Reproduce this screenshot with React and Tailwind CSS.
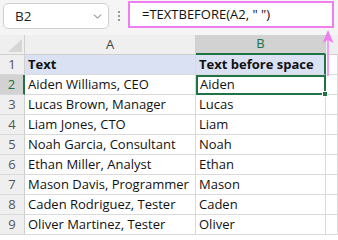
import { ChevronDown } from 'lucide-react'

const ROWS = [
  ['Aiden Williams, CEO', 'Aiden'],
  ['Lucas Brown, Manager', 'Lucas'],
  ['Liam Jones, CTO', 'Liam'],
  ['Noah Garcia, Consultant', 'Noah'],
  ['Ethan Miller, Analyst', 'Ethan'],
  ['Mason Davis, Programmer', 'Mason'],
  ['Caden Rodriguez, Tester', 'Caden'],
  ['Oliver Martinez, Tester', 'Oliver'],
]

const font = { fontFamily: '"Open Sans", "Noto Sans", sans-serif' }

function RowNum({ n, active }) {
  return (
    <div
      className={
        'h-5 flex items-center justify-center text-[13px] border-b border-[#dadada] ' +
        (active
          ? 'bg-[#d2d2d2] text-[#217346] border-r-2 border-r-[#217346]'
          : 'bg-[#efefef] text-[#555] border-r border-r-[#cfcfcf]')
      }
    >
      {n}
    </div>
  )
}

function Cell({ children, className = '' }) {
  return (
    <div className={'h-5 flex items-center pl-[3px] text-[13px] text-[#111] border-b border-r border-[#dadada] whitespace-nowrap overflow-hidden ' + className}>
      {children}
    </div>
  )
}

export default function App() {
  return (
    <div className="relative w-[338px] h-[236px] overflow-hidden bg-white" style={font}>
      {/* ── Formula bar ── */}
      <div className="h-[35px] bg-[#f5f5f5] flex items-start">
        <div className="ml-[3px] mt-[3px] w-[106px] h-[26px] bg-white border border-[#cfcfcf] rounded-[5px] flex items-center justify-between pl-[11px] pr-[4px]">
          <span className="text-[13.5px] text-[#222]">B2</span>
          <ChevronDown size={13} strokeWidth={1.6} className="text-[#555]" />
        </div>
        <div className="w-[19px] mt-[11px] flex flex-col items-center gap-[2px]">
          <span className="w-[2px] h-[2px] bg-[#9a9a9a]" />
          <span className="w-[2px] h-[2px] bg-[#9a9a9a]" />
          <span className="w-[2px] h-[2px] bg-[#9a9a9a]" />
        </div>
        <div className="mt-px w-[206px] h-[27px] bg-white border-2 border-[#f07ef0] flex items-center pl-[12px]">
          <span className="text-[13px] text-[#111]">=TEXTBEFORE(A2, " ")</span>
        </div>
      </div>

      {/* ── Sheet ── */}
      <div className="grid grid-cols-[25px_171px_130px_1fr]">
        {/* header row */}
        <div className="h-5 bg-[#efefef] border-r border-b border-[#cfcfcf] flex items-end justify-end pr-[2px] pb-[2px]">
          <svg width="14" height="13" viewBox="0 0 14 13">
            <polygon points="14,0 14,13 0,13" fill="#d6d6d6" />
          </svg>
        </div>
        <div className="h-5 bg-[#efefef] border-r border-b border-[#cfcfcf] flex items-center justify-center text-[13px] text-[#444]">A</div>
        <div className="h-5 bg-[#d2d2d2] border-r border-[#cfcfcf] border-b-2 border-b-[#217346] flex items-center justify-center text-[13px] text-[#217346]">B</div>
        <div className="h-5 bg-[#efefef] border-b border-[#cfcfcf]" />

        {/* row 1 */}
        <RowNum n={1} />
        <Cell className="bg-[#d9e1f2] font-bold">Text</Cell>
        <Cell className="bg-[#d9e1f2] font-bold border-r-2 border-r-[#217346]">Text before space</Cell>
        <Cell />

        {ROWS.map(([full, first], i) => (
          <div key={full} className="contents">
            <RowNum n={i + 2} active={i === 0} />
            <Cell>{full}</Cell>
            {i === 0 ? (
              <div className="relative h-5 flex items-center pl-[2px] text-[13px] text-[#111] border-2 border-[#217346]">
                {first}
                <span className="absolute -right-[4px] -bottom-[4px] w-[6px] h-[6px] bg-[#217346] border border-white" />
              </div>
            ) : (
              <Cell>{first}</Cell>
            )}
            <Cell />
          </div>
        ))}
      </div>

      {/* annotation arrow */}
      <svg className="absolute left-[320px] top-[28px]" width="16" height="50" viewBox="0 0 16 50">
        <path d="M8 2 L2.5 15 L8 12 L13.5 15 Z" fill="#f07ef0" />
        <rect x="7" y="12" width="2" height="36" fill="#f59cf5" />
      </svg>
    </div>
  )
}
